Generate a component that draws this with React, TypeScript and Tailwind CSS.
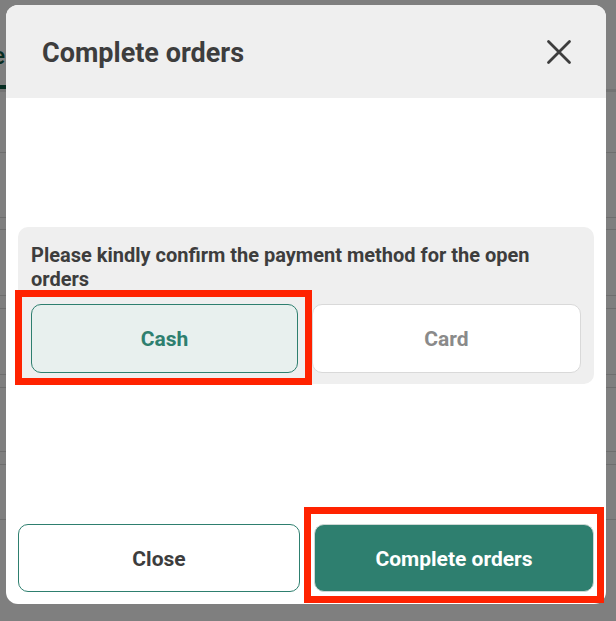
const rows = [
  { h: "h-[61px]" },
  { h: "h-[65px]" },
  { h: "h-[12px]" },
  { h: "h-[66px]" },
  { h: "h-[13px]" },
  { h: "h-[66px]" },
  { h: "h-[13px]" },
  { h: "h-[64px]" },
  { h: "h-[13px]" },
  { h: "h-[55px]" },
];

function Backdrop() {
  return (
    <div className="flex flex-col">
      {/* page header with tabs */}
      <div className="flex h-[92px] border-b-[3px] border-[#e6e6e6]">
        <div className="flex w-[6px] flex-col justify-end overflow-hidden border-b-4 border-[#0f5a44]">
          <div className="mb-[11px] ml-[-62px] whitespace-nowrap text-[24px] font-medium text-[#0f5a44]">Active</div>
        </div>
      </div>
      {rows.map((r, i) => (
        <div key={i} className={`${r.h} border-b border-[#dcdcdc]`} />
      ))}
    </div>
  );
}

function CloseIcon() {
  return (
    <svg width="26" height="26" viewBox="0 0 26 26" className="text-[#3d3d3d]">
      <path d="M2.5 2.5 L23.5 23.5 M23.5 2.5 L2.5 23.5" stroke="currentColor" strokeWidth="2.8" strokeLinecap="round" />
    </svg>
  );
}

export default function App() {
  return (
    <div className="relative h-[621px] w-[616px] overflow-hidden bg-white font-['Roboto','Liberation_Sans',sans-serif]">
      <Backdrop />
      {/* overlay */}
      <div className="absolute inset-0 bg-black/50 pl-[6px] pt-[5px]">
        <div className="flex h-[599px] w-[600px] flex-col rounded-xl bg-white">
          {/* header */}
          <div className="flex h-[93px] items-center justify-between rounded-t-xl bg-[#efefef] pl-[36px] pr-[34px]">
            <h2 className="pt-[4px] text-[27px] font-bold text-[#3d3d3d]">Complete orders</h2>
            <CloseIcon />
          </div>

          {/* body */}
          <div className="flex flex-1 items-center px-3">
            <div className="w-full rounded-[10px] bg-[#efefef] px-[13px] pb-[11px] pt-[16px]">
              <p className="text-[20px] font-bold leading-[24px] text-[#3d3d3d]">
                Please kindly confirm the payment method for the open orders
              </p>
              <div className="mt-[13px] flex gap-[14px]">
                <div className="relative flex-1">
                  <button className="h-[69px] w-full rounded-[10px] border border-[#2e7f6f] bg-[#e8f0ee] pt-[3px] text-[21px] font-bold text-[#2e7f6f]">
                    Cash
                  </button>
                  <div className="pointer-events-none absolute -bottom-[12px] -left-[16px] -right-[14px] -top-[14px] border-[7px] border-[#ff2200]" />
                </div>
                <button className="h-[69px] flex-1 rounded-[10px] border border-[#d9d9d9] bg-white pt-[3px] text-[21px] font-bold text-[#8a8a8a]">
                  Card
                </button>
              </div>
            </div>
          </div>

          {/* footer */}
          <div className="flex gap-[14px] px-3 pb-3 pt-3">
            <button className="h-[68px] flex-1 rounded-[10px] border border-[#2e7f6f] bg-white pt-[4px] text-[21px] font-bold text-[#3d3d3d]">
              Close
            </button>
            <div className="relative flex-1">
              <button className="h-[68px] w-full rounded-[10px] border border-[#cfd8d5] bg-[#2e7f6f] pt-[4px] text-[21px] font-bold text-white">
                Complete orders
              </button>
              <div className="pointer-events-none absolute -bottom-[11px] -left-[10px] -right-[10px] -top-[17px] border-[7px] border-[#ff2200]" />
            </div>
          </div>
        </div>
      </div>
    </div>
  );
}
